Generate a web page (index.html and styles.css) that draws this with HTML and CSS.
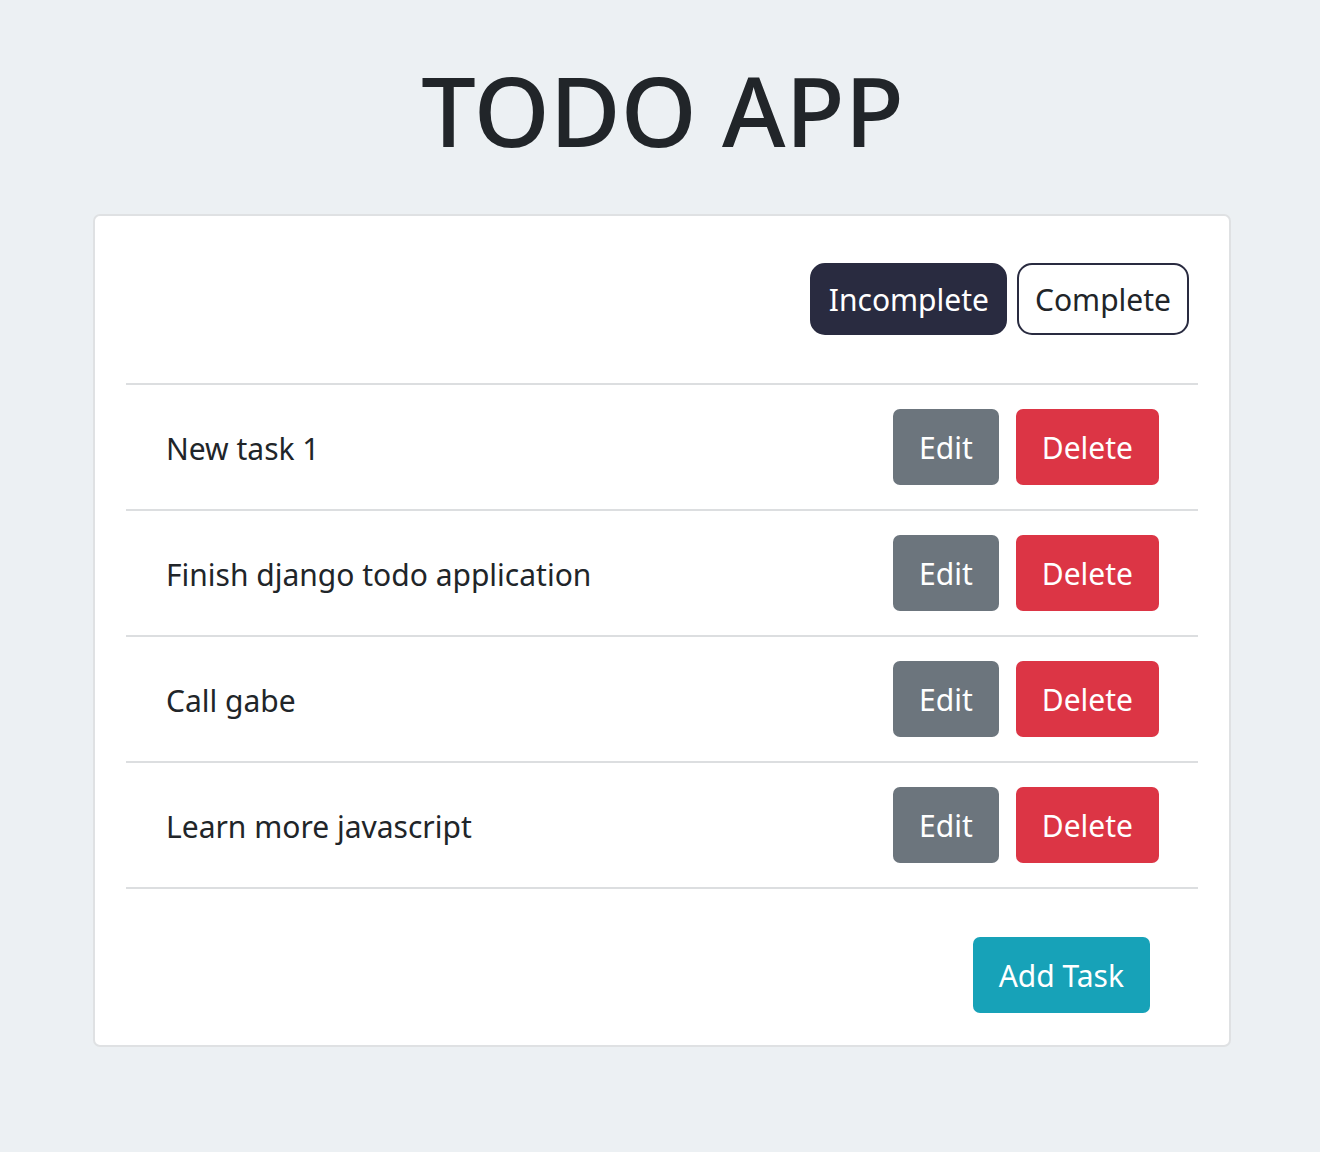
FILE: index.html
```html
<!DOCTYPE html>
<html lang="en">
<head>
<meta charset="utf-8">
<title>Todo App</title>
<link rel="stylesheet" href="styles.css">
</head>
<body>
<h1 class="title">TODO APP</h1>
<div class="card">
  <div class="filters">
    <button class="btn btn-dark">Incomplete</button>
    <button class="btn btn-outline">Complete</button>
  </div>
  <ul class="tasks">
    <li class="task"><span class="task-name">New task 1</span><span class="actions"><button class="btn btn-edit">Edit</button><button class="btn btn-delete">Delete</button></span></li>
    <li class="task"><span class="task-name">Finish django todo application</span><span class="actions"><button class="btn btn-edit">Edit</button><button class="btn btn-delete">Delete</button></span></li>
    <li class="task"><span class="task-name">Call gabe</span><span class="actions"><button class="btn btn-edit">Edit</button><button class="btn btn-delete">Delete</button></span></li>
    <li class="task"><span class="task-name">Learn more javascript</span><span class="actions"><button class="btn btn-edit">Edit</button><button class="btn btn-delete">Delete</button></span></li>
  </ul>
  <div class="footer">
    <button class="btn btn-add">Add Task</button>
  </div>
</div>
</body>
</html>
```

FILE: styles.css
```css
* { box-sizing: border-box; }
html, body { margin: 0; padding: 0; }
body {
  background: #ecf0f3;
  font-family: "Noto Sans", "Open Sans", sans-serif;
  color: #212529;
  padding-top: 52px;
}
.title {
  margin: 0;
  text-align: center;
  font-size: 97px;
  font-weight: 500;
  line-height: 110px;
  color: #212529;
  padding-left: 5px;
  padding-top: 2px;
}
.card {
  margin: 50px 89px 0 93px;
  background: #fff;
  border: 2px solid #dfe1e3;
  border-radius: 7px;
  padding: 0 31px 32px 31px;
}
.filters {
  display: flex;
  justify-content: flex-end;
  gap: 10px;
  padding: 47px 9px 48px 0;
  border-bottom: 2px solid #dcdee0;
}
.btn {
  font-family: inherit;
  font-size: 30px;
  line-height: 44px;
  border: 2px solid transparent;
  border-radius: 7px;
  padding: 15px 24px 13px;
  cursor: pointer;
  color: #fff;
}
.btn-dark {
  background: #292b40;
  border-color: #292b40;
  border-radius: 15px;
  padding: 13px 16px 11px 17px;
}
.btn-outline {
  background: #fff;
  color: #212529;
  border-color: #292b40;
  border-radius: 15px;
  padding: 13px 16px 11px;
}
.tasks {
  list-style: none;
  margin: 0;
  padding: 0;
}
.task {
  display: flex;
  align-items: center;
  justify-content: space-between;
  padding: 24px 39px 24px 40px;
  border-bottom: 2px solid #dcdee0;
}
.task-name {
  font-size: 30px;
  color: #212529;
  padding-top: 3px;
}
.actions {
  display: flex;
  gap: 17px;
}
.btn-edit { background: #6c757d; }
.btn-delete { background: #dc3545; }
.footer {
  display: flex;
  justify-content: flex-end;
  padding: 48px 48px 0 0;
}
.btn-add { background: #17a2b8; }
```
